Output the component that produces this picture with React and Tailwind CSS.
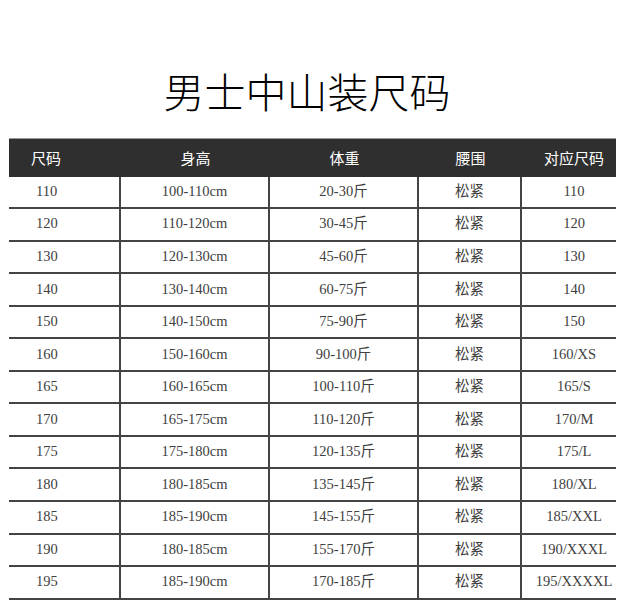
import React from "react";

const rows = [
  ["110", "100-110cm", "20-30斤", "松紧", "110"],
  ["120", "110-120cm", "30-45斤", "松紧", "120"],
  ["130", "120-130cm", "45-60斤", "松紧", "130"],
  ["140", "130-140cm", "60-75斤", "松紧", "140"],
  ["150", "140-150cm", "75-90斤", "松紧", "150"],
  ["160", "150-160cm", "90-100斤", "松紧", "160/XS"],
  ["165", "160-165cm", "100-110斤", "松紧", "165/S"],
  ["170", "165-175cm", "110-120斤", "松紧", "170/M"],
  ["175", "175-180cm", "120-135斤", "松紧", "175/L"],
  ["180", "180-185cm", "135-145斤", "松紧", "180/XL"],
  ["185", "185-190cm", "145-155斤", "松紧", "185/XXL"],
  ["190", "180-185cm", "155-170斤", "松紧", "190/XXXL"],
  ["195", "185-190cm", "170-185斤", "松紧", "195/XXXXL"],
];

const headers = ["尺码", "身高", "体重", "腰围", "对应尺码"];

const cellPos = [
  "justify-start pl-[27px]",
  "justify-center",
  "justify-center",
  "justify-center",
  "justify-center pl-[10px]",
];

const App = () => {
  return (
    <div className="w-[624px] h-[614px] bg-white overflow-hidden">
      {/* title */}
      <div className="h-[138px] pt-[42px] flex items-center justify-center">
        <h1 className="text-[41px] leading-none text-black font-light pr-[10px] font-['Noto_Sans_CJK_SC',serif]">
          男士中山装尺码
        </h1>
      </div>

      <div className="ml-[9px] w-[607px]">
        {/* header */}
        <div className="grid grid-cols-[112px_149px_149px_103px_94px] h-[38.5px] bg-[#2f2f2f] border-t border-[#9a9a9a]">
          {headers.map((h, i) => (
            <div
              key={h}
              className={`flex items-center text-[15px] text-white font-['Noto_Sans_CJK_SC',sans-serif] ${
                i === 0 ? "justify-start pl-[22px]" : cellPos[i]
              }`}
            >
              {h}
            </div>
          ))}
        </div>

        {/* body */}
        {rows.map((r) => (
          <div
            key={r[0]}
            className="grid grid-cols-[112px_149px_149px_103px_94px] h-[32.55px] border-b-2 border-[#444]"
          >
            {r.map((c, i) => (
              <div
                key={i}
                className={`flex items-center text-[14.5px] text-[#404040] font-['Liberation_Serif','Noto_Sans_CJK_SC',serif] ${
                  cellPos[i]
                } ${i < 4 ? "border-r-2 border-[#444]" : ""}`}
              >
                {c}
              </div>
            ))}
          </div>
        ))}
      </div>
    </div>
  );
};

export default App;
